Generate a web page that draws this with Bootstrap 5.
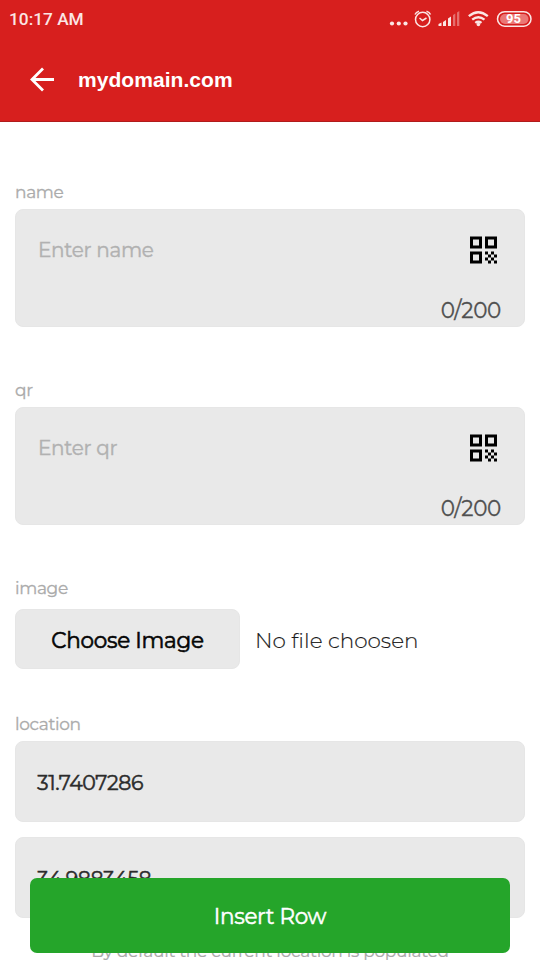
<!DOCTYPE html>
<html lang="en">
<head>
<meta charset="utf-8">
<meta name="viewport" content="width=device-width, initial-scale=1">
<title>mydomain.com</title>
<link href="https://cdn.jsdelivr.net/npm/bootstrap@5.3.0/dist/css/bootstrap.min.css" rel="stylesheet">
<style>
body{font-family:Montserrat,Inter,sans-serif;height:960px;overflow:hidden;background:#fff}
.app-head{background:#d71f1e;height:122px;border-bottom:1px solid #b01c1c}
.status{height:38px;padding:0 8px 0 9px;color:#fbe6e4;font:500 17.3px/38px Roboto,sans-serif}
.title-bar{height:83px;padding-left:29px;gap:23px}
.title-text{font:700 21px/28px "Liberation Sans",Arial,sans-serif;color:#fff;letter-spacing:.05px}
.form-area{padding:56px 15px 0}
.lbl{display:block;font-size:17px;line-height:28px;height:31px;color:#ababab;margin:0;letter-spacing:-.35px;-webkit-text-stroke:.3px}
.lbl-location{margin-top:41px}
.box{background:#e9e9e9;border-radius:8px;border:1px solid #e6e6e6}
.text-box{height:118px;padding:0 23px 0 22px;margin-bottom:49px}
.top-line{height:80px}
.ph{font-size:20px;line-height:28px;color:#b1b1b1;letter-spacing:-.3px;-webkit-text-stroke:.4px}
.count{font-size:21.5px;line-height:28px;margin-top:6px;color:#505050;letter-spacing:-.3px;-webkit-text-stroke:.3px}
.choose{width:225px;height:60px;font-size:21.5px;color:#050505;line-height:60px;letter-spacing:-.25px;-webkit-text-stroke:.6px}
.nofile{font-size:21.5px;font-weight:300;color:#1b1b1b;margin-left:15px;padding-top:2px;-webkit-text-stroke:.15px}
.num-box{height:81px;padding:0 21px;margin-bottom:15px;font-size:20.5px;line-height:81px;color:#2b2b2b;letter-spacing:-.4px;-webkit-text-stroke:.5px}
.hint{font-size:17px;line-height:26px;margin-top:20px;color:#a9a9a9;letter-spacing:-.28px;-webkit-text-stroke:.2px}
.insert{left:30px;right:30px;top:877.5px;height:75px;background:#25a52a;border-radius:7px;color:#fff;font-size:21.5px;line-height:77px;letter-spacing:-.3px;-webkit-text-stroke:.5px}
.insert,.choose,.nofile,.hint,.lbl,.ph,.count,.num-box{white-space:nowrap}
</style>
</head>
<body class="position-relative">
<header class="app-head">
  <div class="status d-flex justify-content-between align-items-center">
    <span>10:17 AM</span>
    <svg width="144" height="24" viewBox="388 7 144 24" fill="none" stroke="#fbe6e4">
      <g fill="#fbe6e4" stroke="none"><circle cx="392" cy="23.5" r="2.1"/><circle cx="398.800" cy="23.500" r="2.100"/><circle cx="405.500" cy="23.500" r="2.100"/></g>
      <circle cx="422.700" cy="19.500" r="7.200" stroke-width="1.500"/><path d="M415 14.500q1-2.500 4-3.300M430.500 14.500q-1-2.500-4-3.300M419.500 18l3 2.500 4-2.500" stroke-width="1.500"/>
      <path d="M438.500 26v-2l3-1.500V26zM443 26v-4l3-2V26zM448 26v-7.500l3-2V26z" fill="#fbe6e4" stroke="none"/><path d="M453 26V15l2.300-1.500V26zM457 26V12.500l2.300-1.500V26z" fill="#fbe6e4" stroke="none" opacity=".4"/>
      <path d="M468.800 16.200q9.500-8 19 0M472.200 19.700q6.100-5 12.300 0M475.300 22.900q3-2.400 6.200 0" stroke-width="2.300"/><circle cx="478.400" cy="24.500" r="1.800" fill="#fbe6e4" stroke="none"/>
      <rect x="497.500" y="11.700" width="33.500" height="14.500" rx="7.250" stroke-width="1.500"/><rect x="500" y="14" width="28.500" height="10" rx="5" fill="#eb7775" stroke="none"/>
      <text x="513.500" y="23.300" text-anchor="middle" font-family="Roboto,sans-serif" font-size="13" font-weight="700" fill="#fff" stroke="none">95</text>
    </svg>
  </div>
  <div class="title-bar d-flex align-items-center">
    <svg width="26" height="26" viewBox="0 0 26 26" fill="none" stroke="#fff" stroke-width="2.800"><path d="M25 12.500H3M14 1.500l-11 11 11 11"/></svg>
    <span class="title-text">mydomain.com</span>
  </div>
</header>
<svg class="d-none"><symbol id="qr" viewBox="3 3 18 18"><path fill-rule="evenodd" d="M3 3h8v8H3zM5 5v4h4V5zM3 13h8v8H3zM5 15v4h4v-4zM13 3h8v8h-8zM15 5v4h4V5zM19 19h2v2h-2zM13 13h2v2h-2zM15 15h2v2h-2zM13 17h2v2h-2zM15 19h2v2h-2zM17 17h2v2h-2zM17 13h2v2h-2zM19 15h2v2h-2z"/></symbol></svg>
<main class="form-area">
  <span class="lbl"><span>name</span></span>
  <div class="box text-box">
    <div class="top-line d-flex justify-content-between align-items-center"><span class="ph">Enter name</span><svg class="me-1" width="27" height="28"><use href="#qr"/></svg></div>
    <div class="count text-end"><span>0/200</span></div>
  </div>
  <span class="lbl"><span>qr</span></span>
  <div class="box text-box">
    <div class="top-line d-flex justify-content-between align-items-center"><span class="ph">Enter qr</span><svg class="me-1" width="27" height="28"><use href="#qr"/></svg></div>
    <div class="count text-end"><span>0/200</span></div>
  </div>
  <span class="lbl"><span>image</span></span>
  <div class="d-flex align-items-center mt-1"><div class="box choose text-center">Choose Image</div><span class="nofile">No file choosen</span></div>
  <span class="lbl lbl-location"><span>location</span></span>
  <div class="box num-box">31.7407286</div>
  <div class="box num-box">34.9883458</div>
  <div class="hint text-center">By default the current location is populated</div>
</main>
<div class="insert position-absolute text-center">Insert Row</div>
<script src="https://cdn.jsdelivr.net/npm/bootstrap@5.3.0/dist/js/bootstrap.bundle.min.js"></script>
</body>
</html>
